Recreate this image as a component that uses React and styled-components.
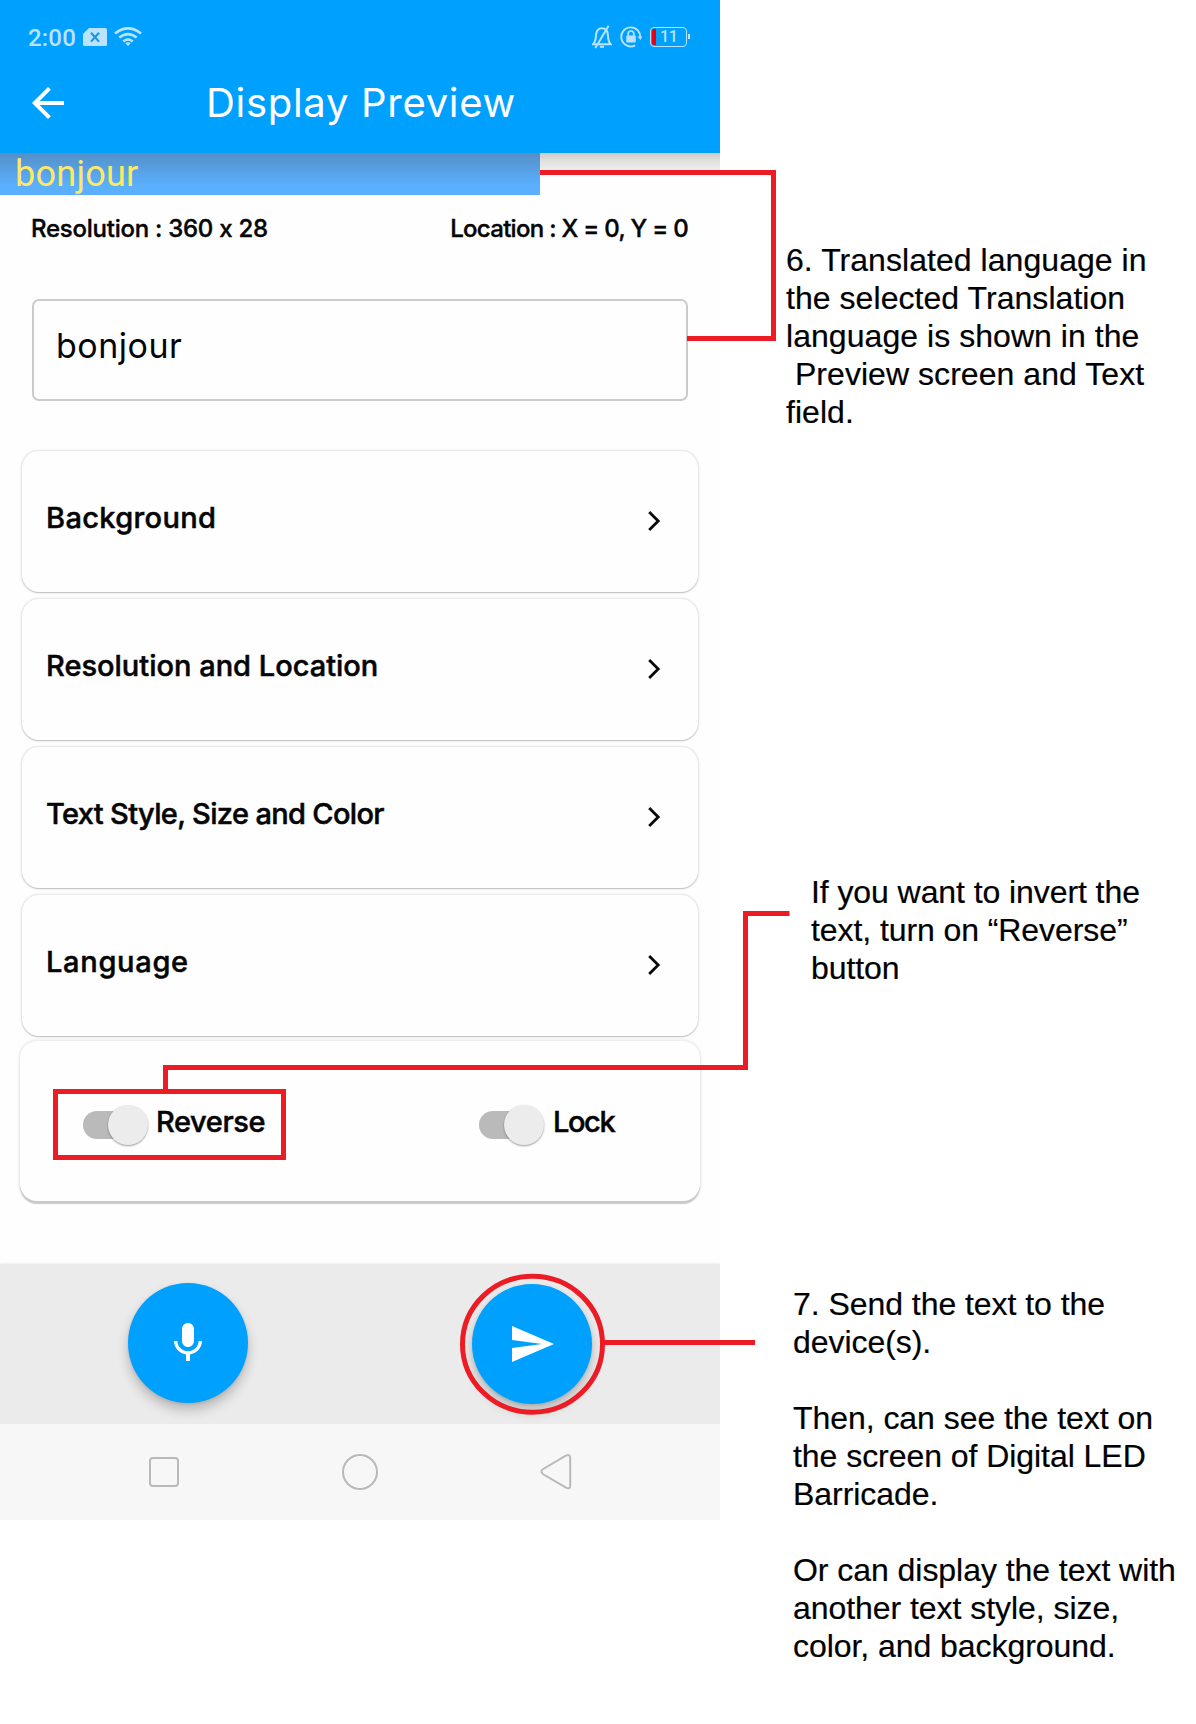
import React from "react";
import styled, { createGlobalStyle } from "styled-components";

const BLUE = "#00a0ff";
const RED = "#ed1c24";
const STATUS = "#b9e3ff";

const GlobalStyle = createGlobalStyle`
  *, *::before, *::after { box-sizing: border-box; }
  body { margin: 0; background: #fff; }
`;

const Page = styled.main`
  position: relative;
  display: flex;
  align-items: flex-start;
  width: 1196px;
  height: 1724px;
  overflow: hidden;
  background: #fff;
`;

const Phone = styled.section`
  display: flex;
  flex-direction: column;
  flex: none;
  width: 720px;
  height: 1520px;
  overflow: hidden;
  background: #fefefe;
  color: #050505;
  font-family: Inter, "Open Sans", sans-serif;
`;

const Header = styled.header`
  flex: none;
  height: 153px;
  background: ${BLUE};
`;

const StatusBar = styled.div`
  display: flex;
  align-items: center;
  justify-content: space-between;
  height: 53px;
  padding: 20px 30px 0 28px;
  color: ${STATUS};
`;

const StatusGroup = styled.div`
  display: flex;
  align-items: center;
  gap: ${(p) => p.$gap}px;
`;

const Clock = styled.span`
  padding-top: 2px;
  font: 500 24px/24px Roboto, sans-serif;
  letter-spacing: 0.2px;
`;

const Toolbar = styled.div`
  display: flex;
  align-items: center;
  gap: 134px;
  height: 100px;
  padding-left: 24px;
`;

const Title = styled.h1`
  margin: 0;
  color: #fff;
  font-size: 40px;
  font-weight: 400;
  line-height: 48px;
  letter-spacing: 0.7px;
  white-space: nowrap;
`;

const PreviewRow = styled.div`
  display: flex;
  flex: none;
  height: 42px;
`;

const PreviewScreen = styled.div`
  width: 540px;
  padding-left: 15px;
  background: linear-gradient(#558fc6, #56a3e9 45%, #5bafff 78%);
  color: #ffe866;
  font: 400 36px/43px Roboto, sans-serif;
  letter-spacing: 0.25px;
`;

const HeaderShade = styled.div`
  flex: 1;
  height: 17px;
  background: linear-gradient(#cfcac7, #e0e0e0 45%, #eeeeee);
`;

const InfoRow = styled.div`
  display: flex;
  flex: none;
  align-items: center;
  justify-content: space-between;
  height: 66px;
  padding: 0 32px 0 31px;
`;

const Info = styled.span`
  font-size: 24px;
  font-weight: 500;
  -webkit-text-stroke: 0.4px currentColor;
  letter-spacing: ${(p) => p.$tracking}px;
  white-space: nowrap;
`;

const Field = styled.div`
  display: flex;
  flex: none;
  align-items: center;
  height: 102px;
  margin: 38px 32px 0;
  padding: 0 22px 9px;
  border: 2px solid #cbcbcb;
  border-radius: 7px;
  font-size: 34px;
  letter-spacing: 0.5px;
`;

const CardList = styled.div`
  display: flex;
  flex: none;
  flex-direction: column;
  gap: 7px;
  margin: 50px 22px 0;
`;

const Card = styled.div`
  display: flex;
  align-items: center;
  height: ${(p) => p.$height || 141}px;
  border-radius: 17px;
  background: #fefefe;
  box-shadow: 0 1px 1px #c4c4c4, 0 0 2px 1px rgba(0, 0, 0, 0.11);
`;

const MenuCard = styled(Card)`
  justify-content: space-between;
  padding: 0 31px 0 24px;
`;

const SettingsCard = styled(Card)`
  flex: none;
  margin: 5px 20px 0;
  box-shadow: 0 3px 1px #c9c9c9, 0 0 3px 1px rgba(0, 0, 0, 0.1);
`;

const Label = styled.span`
  padding-bottom: ${(p) => p.$lift || 0}px;
  font-size: 29px;
  font-weight: 500;
  -webkit-text-stroke: 0.5px currentColor;
  letter-spacing: ${(p) => p.$tracking}px;
  white-space: nowrap;
`;

const Setting = styled.div`
  display: flex;
  flex: none;
  align-items: center;
  width: 396px;
  padding-left: 63px;

  &:last-child {
    width: auto;
  }
`;

const Switch = styled.div`
  display: flex;
  align-items: center;
  width: 52px;
  height: 28px;
  margin: 8px ${(p) => p.$gap}px 0 0;
  padding-left: 25px;
  border-radius: 14px;
  background: #bababa;
`;

const Thumb = styled.div`
  flex: none;
  width: 40px;
  height: 40px;
  border-radius: 50%;
  background: #ececec;
  box-shadow: 0 1px 2px rgba(0, 0, 0, 0.38);
`;

const ActionBar = styled.div`
  display: flex;
  flex: none;
  gap: 224px;
  height: 160px;
  margin-top: 63px;
  padding: 19px 0 0 128px;
  background: #ebebeb;
  box-shadow: 0 0 3px rgba(0, 0, 0, 0.12);
`;

const RoundButton = styled.button`
  display: grid;
  place-items: center;
  width: 120px;
  height: 120px;
  margin: ${(p) => p.$drop || 0}px 0 0;
  padding: 0;
  border: 0;
  border-radius: 50%;
  background: ${BLUE};
  box-shadow: 0 7px 12px rgba(0, 0, 0, 0.22), 0 1px 3px rgba(0, 0, 0, 0.1);
`;

const NavBar = styled.nav`
  display: flex;
  flex: none;
  align-items: center;
  justify-content: space-between;
  height: 96px;
  padding: 0 148px;
  background: #f7f7f7;
`;

const Notes = styled.aside`
  display: flex;
  flex: 1;
  flex-direction: column;
  padding-top: 241px;
`;

const Note = styled.p`
  margin: ${(p) => p.$gap || 0}px 0 0;
  padding-left: ${(p) => p.$indent}px;
  color: #000;
  font: 400 32px/38px "Liberation Sans", Arial, sans-serif;
  letter-spacing: ${(p) => p.$tracking || 0}px;
  -webkit-text-stroke: 0.2px currentColor;
  white-space: pre;
`;

const Callouts = styled.svg`
  position: absolute;
  inset: 0;
  pointer-events: none;
`;

const Glyph = ({ size = 48, children }) => (
  <svg width={size} height={size} viewBox="0 0 24 24" fill="#fff">
    {children}
  </svg>
);

const SimIcon = () => (
  <svg width="24" height="18" viewBox="0 0 24 18">
    <path d="M6 0H22.5Q24 0 24 1.5V16.5Q24 18 22.5 18H1.5Q0 18 0 16.5V6Z" fill={STATUS} />
    <path d="M8 4.8L16 13.6M16 4.8L8 13.6" stroke="#1f93dc" strokeWidth="2.1" />
  </svg>
);

const WifiIcon = () => (
  <svg width="28" height="20" viewBox="0 0 28 20" fill="none" stroke={STATUS} strokeWidth="2.6">
    <path d="M1 6.5Q14-3.7 27 6.5M5.3 10.6Q14 3.6 22.7 10.6M9.3 14.4Q14 10.6 18.7 14.4" />
    <path d="M11.3 16.2Q14 14.2 16.7 16.2L14 19Z" fill={STATUS} stroke="none" />
  </svg>
);

const MutedBellIcon = () => (
  <svg width="20" height="24" viewBox="0 0 20 24" fill="none" stroke={STATUS} strokeWidth="2">
    <path d="M1 19.3H18.6C16.3 16.7 16.3 14.5 15.9 10C15.6 6 13.6 3.3 10 3.3S4.4 6 4.1 10C3.7 14.5 3.7 16.7 1 19.3Z" />
    <path d="M16.6 0.8L3.3 23M7.8 21.7H12" />
  </svg>
);

const RotationLockIcon = () => (
  <svg width="22" height="22" viewBox="0 0 22 22" fill="none" stroke={STATUS} strokeWidth="1.9">
    <path d="M15.2 19.3A9.5 9.5 0 1 1 20.2 12.2" />
    <path d="M17.4 10.6H22L20.6 14Z" fill={STATUS} stroke="none" />
    <path d="M8.2 10V7.8a2.8 2.8 0 0 1 5.6 0V10" strokeWidth="1.7" />
    <rect x="6.2" y="9.4" width="9.6" height="7" rx="1" fill={STATUS} stroke="none" />
  </svg>
);

const Battery = styled.div`
  display: flex;
  align-items: center;
  gap: 1px;
  height: 20px;

  &::after {
    content: "";
    width: 2px;
    height: 5px;
    background: ${STATUS};
  }
`;

const BatteryCell = styled.div`
  display: flex;
  align-items: center;
  width: 37px;
  height: 20px;
  border: 1.5px solid ${STATUS};
  border-radius: 4px;
  font: 500 16px/18px Roboto, sans-serif;
  letter-spacing: -0.3px;

  &::before {
    content: "";
    width: 4px;
    height: 16px;
    margin: 0 4px 0 1px;
    border-radius: 2px 0 0 2px;
    background: #e60012;
  }
`;

const Chevron = () => (
  <svg width="24" height="24" viewBox="0 0 24 24" fill="none" stroke="#080808" strokeWidth="2.8">
    <path d="M6.2 1.9L15.2 11L6.2 20.1" />
  </svg>
);

const menu = [
  { text: "Background", tracking: 0.35 },
  { text: "Resolution and Location", tracking: 0 },
  { text: "Text Style, Size and Color", tracking: -0.65 },
  { text: "Language", tracking: 0.7 },
];

const settings = [
  { text: "Reverse", tracking: -0.4, gap: 21 },
  { text: "Lock", tracking: -1.4, gap: 22 },
];

export default function App() {
  return (
    <>
      <GlobalStyle />
      <Page>
        <Phone>
          <Header>
            <StatusBar>
              <StatusGroup $gap={7}>
                <Clock>2:00</Clock>
                <SimIcon />
                <WifiIcon />
              </StatusGroup>
              <StatusGroup $gap={8}>
                <MutedBellIcon />
                <RotationLockIcon />
                <Battery>
                  <BatteryCell>11</BatteryCell>
                </Battery>
              </StatusGroup>
            </StatusBar>
            <Toolbar>
              <Glyph>
                <path d="M20 11H7.83l5.59-5.59L12 4l-8 8 8 8 1.41-1.41L7.83 13H20v-2z" />
              </Glyph>
              <Title>Display Preview</Title>
            </Toolbar>
          </Header>

          <PreviewRow>
            <PreviewScreen>bonjour</PreviewScreen>
            <HeaderShade />
          </PreviewRow>

          <InfoRow>
            <Info $tracking={-0.25}>Resolution : 360 x 28</Info>
            <Info $tracking={-0.7}>Location : X = 0, Y = 0</Info>
          </InfoRow>

          <Field>bonjour</Field>

          <CardList>
            {menu.map((item) => (
              <MenuCard key={item.text}>
                <Label $lift={8} $tracking={item.tracking}>{item.text}</Label>
                <Chevron />
              </MenuCard>
            ))}
          </CardList>

          <SettingsCard $height={160}>
            {settings.map((item) => (
              <Setting key={item.text}>
                <Switch $gap={item.gap}>
                  <Thumb />
                </Switch>
                <Label $tracking={item.tracking}>{item.text}</Label>
              </Setting>
            ))}
          </SettingsCard>

          <ActionBar>
            <RoundButton aria-label="Speak">
              <Glyph>
                <path d="M12 14c1.66 0 2.99-1.34 2.99-3L15 5c0-1.66-1.34-3-3-3S9 3.34 9 5v6c0 1.66 1.34 3 3 3zm5.3-3c0 3-2.54 5.1-5.3 5.1S6.7 14 6.7 11H5c0 3.41 2.72 6.23 6 6.72V21h2v-3.28c3.28-.48 6-3.3 6-6.72h-1.7z" />
              </Glyph>
            </RoundButton>
            <RoundButton aria-label="Send" $drop={1}>
              <Glyph>
                <path d="M2.01 21L23 12 2.01 3 2 10l15 2-15 2z" />
              </Glyph>
            </RoundButton>
          </ActionBar>

          <NavBar>
            <svg width="32" height="36" viewBox="0 0 32 36" fill="none" stroke="#b9b9b9" strokeWidth="2">
              <rect x="2" y="4" width="28" height="28" rx="3" />
            </svg>
            <svg width="36" height="36" viewBox="0 0 36 36" fill="none" stroke="#b9b9b9" strokeWidth="2">
              <circle cx="18" cy="18" r="17" />
            </svg>
            <svg width="32" height="36" viewBox="0 0 32 36" fill="none" stroke="#b9b9b9" strokeWidth="2">
              <path d="M25.8 1.6Q30.2 -0.2 30.2 4V31.5Q30.2 35.6 26 33.7L2.8 20Q0 17.6 2.8 15.2Z" />
            </svg>
          </NavBar>
        </Phone>

        <Notes>
          <Note $indent={66} $tracking={0.05}>
            {"6. Translated language in\nthe selected Translation\nlanguage is shown in the\n Preview screen and Text\nfield."}
          </Note>
          <Note $indent={91} $gap={442} $tracking={-0.08}>
            {"If you want to invert the\ntext, turn on “Reverse”\nbutton"}
          </Note>
          <Note $indent={73} $gap={298} $tracking={-0.05}>
            {"7. Send the text to the\ndevice(s).\n\nThen, can see the text on\nthe screen of Digital LED\nBarricade.\n\nOr can display the text with\nanother text style, size,\ncolor, and background."}
          </Note>
        </Notes>

        <Callouts width="1196" height="1724" viewBox="0 0 1196 1724" fill="none" stroke={RED} strokeWidth="5">
          <path d="M540 172.5H773.5V338.5H687" />
          <path d="M165.5 1089V1067.5H745.5V913.5H789.5" />
          <rect x="55.5" y="1091.5" width="228" height="66" />
          <ellipse cx="532.5" cy="1344.2" rx="70" ry="68" />
          <path d="M603 1342.5H755" />
        </Callouts>
      </Page>
    </>
  );
}
